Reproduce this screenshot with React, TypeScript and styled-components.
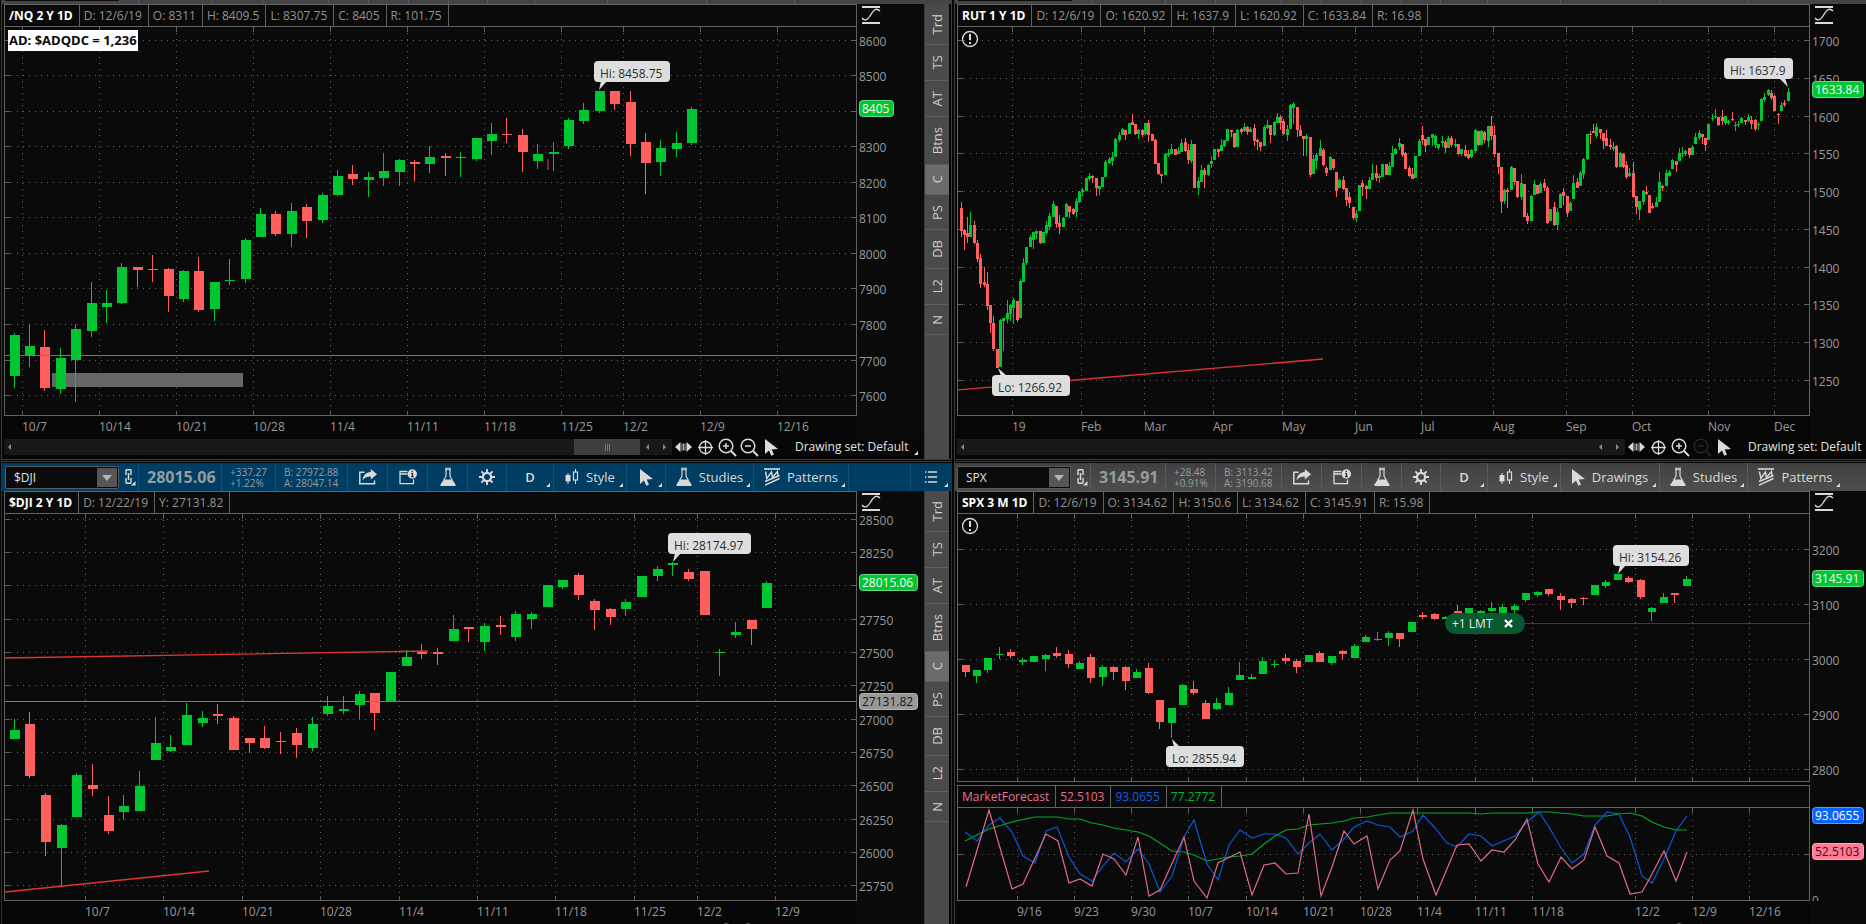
import React from 'react';
import styled, { createGlobalStyle, css } from 'styled-components';

const color = {
  page: '#060606',
  plot: '#0a0a0a',
  frame: '#626262',
  grid: '#606060',
  label: '#929292',
  axis: '#9a9a9a',
  up: '#00c631',
  down: '#ff5f5f',
  trend: '#e03434',
  strip: '#4a4a4a',
  edge: '#3c3c3c',
  active: '#003d62',
};

const GlobalStyle = createGlobalStyle`
  *, *::before, *::after { box-sizing: border-box; }
  html, body { margin: 0; background: ${color.page}; }
  body {
    font-family: "Open Sans", "Noto Sans", sans-serif;
    font-size: 12px;
    color: ${color.label};
    overflow: hidden;
  }
  button, input { font: inherit; color: inherit; margin: 0; padding: 0; border: 0; background: none; }
  svg { display: block; flex: none; }
  svg text { font-size: 12px; }
`;

/* ---------- page frame ---------- */

const Desk = styled.main`
  display: grid;
  grid-template-columns: 953fr 913fr;
  grid-template-rows: 460px 1fr;
  row-gap: 1px;
  height: 100vh;
  overflow: hidden;
`;

const Panel = styled.section<{ $active?: boolean; $last?: boolean; $lower?: boolean }>`
  display: flex;
  flex-direction: column;
  min-width: 0;
  overflow: hidden;
  margin-left: 1px;
  margin-right: ${(p) => (p.$last ? 0 : 1)}px;
  border-left: 1px solid ${(p) => (p.$active ? color.active : color.edge)};
  ${(p) =>
    !p.$last &&
    css`
      border-right: 1px solid ${p.$active ? color.active : color.edge};
    `}
  ${(p) =>
    p.$lower
      ? css`
          border-top: 1px solid ${color.edge};
          padding-top: 1px;
        `
      : css`
          border-bottom: 1px solid ${color.edge};
        `}
`;

const Body = styled.div<{ $last?: boolean }>`
  flex: 1;
  display: flex;
  min-height: 0;
  padding-left: 2px;
  padding-right: ${(p) => (p.$last ? 0 : 2)}px;
`;

const Work = styled.div`
  flex: 1;
  min-width: 0;
  display: flex;
  flex-direction: column;
`;

const ChartRow = styled.div`
  display: flex;
  flex: none;
`;

const PlotColumn = styled.div`
  flex: 1;
  min-width: 0;
`;

const PlotFrame = styled.div<{ $spaced?: boolean }>`
  position: relative;
  border: 1px solid ${color.frame};
  background: ${color.plot};
  margin-top: ${(p) => (p.$spaced ? 3 : 0)}px;
`;

const PriceColumn = styled.div<{ $w: number }>`
  flex: none;
  width: ${(p) => p.$w}px;
  overflow: hidden;
  background: ${color.plot};
`;

const Info = styled.div`
  display: flex;
  height: 22px;
  border-bottom: 1px solid ${color.frame};
`;

const InfoCell = styled.span<{ $ink?: string }>`
  padding: 0 6px 0 4px;
  border-right: 1px solid ${color.frame};
  line-height: 21px;
  white-space: nowrap;
  color: ${(p) => p.$ink ?? color.label};
`;

const Title = styled(InfoCell)`
  font-weight: 700;
  color: #fff;
`;

/* ---------- side tabs ---------- */

const Tabs = styled.nav`
  flex: none;
  width: 25px;
  display: flex;
  flex-direction: column;
  background: ${color.strip};
  border-left: 1px solid #3a3a3a;
`;

const Tab = styled.button<{ $on?: boolean }>`
  display: flex;
  align-items: center;
  justify-content: center;
  padding: 10px 0;
  border-bottom: 1px solid #5e5e5e;
  background: ${(p) => (p.$on ? '#6b6b6b' : 'transparent')};
  color: #cfcfcf;
  font-size: 13px;
  line-height: 16px;

  span {
    writing-mode: vertical-rl;
    transform: rotate(180deg);
  }
`;

const SideTabs = () => (
  <Tabs>
    {['Trd', 'TS', 'AT', 'Btns', 'C', 'PS', 'DB', 'L2', 'N'].map((t) => (
      <Tab key={t} type="button" $on={t === 'C'}>
        <span>{t}</span>
      </Tab>
    ))}
  </Tabs>
);

/* ---------- icons ---------- */

const ink = '#dadada';

const ShareIcon = () => (
  <svg width="18" height="16" viewBox="0 0 18 16" fill="none">
    <path d="M5.500 3.200H.8V14.700h14.700V11.500" stroke={ink} strokeWidth="1.500" />
    <path d="M11.800 0l6.200 5.300-6.200 5.300V7.600C8.200 7.400 5.700 8.400 3.600 11.400 3.900 6.600 6.800 3.300 11.800 3z" fill={ink} />
  </svg>
);

const InfoWindowIcon = () => (
  <svg width="18" height="16" viewBox="0 0 18 16" fill="none">
    <path d="M8.500 5H1M8.500 2.500H1v12.200h13.500V10.500" stroke={ink} strokeWidth="1.300" />
    <circle cx="13.300" cy="5" r="4.700" fill={ink} />
    <path d="M13.300 1.800v1.500M12.200 4.600h1.300v3M12 7.700h2.800" stroke="#26323a" strokeWidth="1.300" />
  </svg>
);

const FlaskIcon = () => (
  <svg width="16" height="20" viewBox="0 0 16 20" fill="none">
    <path d="M5 1.200h6M5.500 2.800h5" stroke={ink} strokeWidth="1.100" />
    <path d="M6 1.500v7.700L3.800 13M10 1.500v7.700l2.200 3.800" stroke={ink} strokeWidth="1.200" />
    <path d="M3.700 12.500h8.600l3.300 5.300q.4 1.200-1 1.200H1.400q-1.400 0-1-1.200z" fill={ink} />
  </svg>
);

const GearIcon = () => (
  <svg width="16" height="16" viewBox="0 0 16 16" fill="none" stroke={ink}>
    <circle cx="8" cy="8" r="4.100" strokeWidth="2.200" />
    <path
      d="M8 0v3.500M8 12.500V16M0 8h3.500M12.500 8H16M2.400 2.400l2.400 2.400M11.200 11.200l2.400 2.400M13.600 2.400l-2.400 2.400M4.800 11.200l-2.400 2.400"
      strokeWidth="1.900"
    />
  </svg>
);

const CandleIcon = () => (
  <svg width="14" height="16" viewBox="0 0 14 16" fill="none">
    <path d="M3 4v11" stroke={ink} />
    <rect x="0.500" y="6" width="5" height="6.500" fill={ink} />
    <path d="M10.500 0v3M10.500 11v4" stroke={ink} />
    <rect x="8.500" y="3" width="4" height="8" stroke={ink} strokeWidth="1.200" />
  </svg>
);

const PointerIcon = () => (
  <svg width="13" height="17" viewBox="0 0 13 17">
    <path d="M0 0v15l4-3.600 2.300 5.300 2.700-1.200-2.300-5.100L13 10z" fill={ink} />
  </svg>
);

const PatternIcon = () => (
  <svg width="16" height="18" viewBox="0 0 16 18" fill="none" stroke={ink}>
    <path d="M0 1h16" strokeWidth="1.600" />
    <path d="M1.500 3.500L2.800 10.500 7.500 4 8.500 9.500 13.500 3.500 14 8" strokeWidth="1.400" />
    <path d="M1 13.500L15.500 7.500M1 17.200L15.500 10.500" strokeWidth="1.400" />
  </svg>
);

const LinkIcon = () => (
  <svg width="11" height="17" viewBox="0 0 11 17" fill="none">
    <path d="M1 6V1.500q0-.7.700-.7h3.600q.7 0 .7.700V6M1 9v4.500q0 .7.700.7h3.600q.7 0 .7-.7V9" stroke={ink} strokeWidth="1.400" />
    <path d="M3.500 4v7" stroke={ink} strokeWidth="1.500" />
    <path d="M10.500 12v4.500H6z" fill={ink} />
  </svg>
);

const ListIcon = () => (
  <svg width="12" height="14" viewBox="0 0 12 14" stroke={ink} strokeWidth="1.300">
    <path d="M0 2h1.500M3 2h9M0 7h1.500M3 7h9M0 12h1.500M3 12h9" />
  </svg>
);

const SpreadIcon = () => (
  <svg width="17" height="12" viewBox="0 0 17 12" fill={ink}>
    <path d="M0 6l5.500-5v10zM17 6l-5.500-5v10z" />
    <path d="M7 2.500v7M8.500 2.500v7M10 2.500v7" stroke={ink} strokeWidth=".8" />
  </svg>
);

const CrosshairIcon = () => (
  <svg width="15" height="15" viewBox="0 0 15 15" fill="none" stroke={ink} strokeWidth="1.300">
    <circle cx="7.500" cy="7.500" r="6" />
    <path d="M7.500 0v15M0 7.500h15" />
  </svg>
);

const ZoomIcon = ({ plus, dim }: { plus?: boolean; dim?: boolean }) => (
  <svg width="19" height="19" viewBox="0 0 19 19" fill="none" stroke={dim ? '#262626' : ink} strokeWidth="1.500">
    <circle cx="8" cy="8" r="6.800" />
    <path d={plus ? 'M5 8h6M8 5v6' : 'M5 8h6'} />
    <path d="M13 13l5 5" strokeWidth="2" />
  </svg>
);

/* ---------- toolbar ---------- */

const Toolbar = styled.div<{ $active?: boolean; $last?: boolean }>`
  display: flex;
  flex: none;
  align-items: stretch;
  height: 28px;
  padding-left: ${(p) => (p.$last ? 2 : 3)}px;
  overflow: hidden;
  background: ${(p) => (p.$active ? color.active : 'linear-gradient(#414141, #4e4e4e)')};
  --rule: ${(p) => (p.$active ? '#0d5480' : '#5a5a5a')};
`;

const Combo = styled.label`
  display: flex;
  flex: none;
  width: 114px;
  height: 23px;
  margin: 3px 0 0;
  border: 1px solid #5a5a5a;
  border-radius: 2px;
  background: #0b0b0b;

  input {
    flex: 1;
    min-width: 0;
    padding-left: 8px;
    color: #e2e2e2;
    outline: none;
  }
`;

const Drop = styled.button`
  display: flex;
  align-items: center;
  justify-content: center;
  width: 20px;
  margin: 1px;
  background: #565656;
`;

const LinkSlot = styled.button`
  display: flex;
  align-items: center;
  justify-content: flex-end;
  flex: none;
  width: 20px;
  padding-right: 2px;
  border-right: 1px solid var(--rule);
`;

const Quote = styled.div<{ $w: number; $big?: boolean }>`
  flex: none;
  width: ${(p) => p.$w}px;
  padding: 4px 0 0 8px;
  border-right: 1px solid var(--rule);
  color: #979c9f;
  font-size: 10px;
  line-height: 11px;
  white-space: nowrap;
  ${(p) =>
    p.$big &&
    css`
      padding-top: 0;
      font-size: 16px;
      font-weight: 700;
      line-height: 28px;
    `}
`;

const Tool = styled.button<{ $w: number }>`
  position: relative;
  display: flex;
  flex: none;
  align-items: center;
  justify-content: center;
  gap: 7px;
  width: ${(p) => p.$w}px;
  border-right: 1px solid var(--rule);
  color: #dadada;
  font-size: 13px;
  white-space: nowrap;

  &:last-child {
    border-right: 0;
  }
`;

const Interval = styled(Tool)`
  font-weight: 600;
`;

const CornerMark = styled.i`
  position: absolute;
  right: 3px;
  bottom: 4px;
  border-style: solid;
  border-width: 0 0 4px 4px;
  border-color: transparent transparent ${ink} transparent;
`;

const Spacer = styled.div`
  flex: 1;
  border-right: 1px solid var(--rule);
`;

type BarProps = {
  symbol: string;
  price: string;
  change: [string, string];
  book: [string, string];
  widths: [number, number, number];
  active?: boolean;
  last?: boolean;
};

const QuoteBar = ({ symbol, price, change, book, widths, active, last }: BarProps) => (
  <Toolbar $active={active} $last={last}>
    <Combo>
      <input aria-label="Symbol" defaultValue={symbol} />
      <Drop type="button" aria-label="Symbol list">
        <svg width="10" height="6" viewBox="0 0 10 6">
          <path d="M0 0h10L5 6z" fill="#b4b4b4" />
        </svg>
      </Drop>
    </Combo>
    <LinkSlot type="button" aria-label="Link colour">
      <LinkIcon />
    </LinkSlot>
    <Quote $w={widths[0]} $big>{price}</Quote>
    <Quote $w={widths[1]}>
      {change[0]}
      <br />
      {change[1]}
    </Quote>
    <Quote $w={widths[2]}>
      {book[0]}
      <br />
      {book[1]}
    </Quote>
    <Tool $w={40} type="button" aria-label="Share"><ShareIcon /></Tool>
    <Tool $w={40} type="button" aria-label="Events"><InfoWindowIcon /></Tool>
    <Tool $w={40} type="button" aria-label="Quick studies"><FlaskIcon /></Tool>
    <Tool $w={39} type="button" aria-label="Settings"><GearIcon /></Tool>
    <Interval $w={47} type="button">D<CornerMark /></Interval>
    <Tool $w={73} type="button"><CandleIcon />Style<CornerMark /></Tool>
    {active ? (
      <Tool $w={39} type="button" aria-label="Drawings"><PointerIcon /><CornerMark /></Tool>
    ) : (
      <Tool $w={99} type="button"><PointerIcon />Drawings<CornerMark /></Tool>
    )}
    <Tool $w={88} type="button"><FlaskIcon />Studies<CornerMark /></Tool>
    <Tool $w={95} type="button"><PatternIcon />Patterns<CornerMark /></Tool>
    {active && <Spacer />}
    {active && <Tool $w={40} type="button" aria-label="Menu"><ListIcon /><CornerMark /></Tool>}
  </Toolbar>
);

const TopEdge = styled.div`
  display: flex;
  flex: none;
  height: 4px;
  padding-left: 3px;
  background: #454545;

  i {
    width: 114px;
    height: 1px;
    background: #0b0b0b;
  }
`;

const EdgeRule = styled.b<{ $w: number }>`
  flex: none;
  width: ${(p) => p.$w}px;
  border-right: 1px solid #5a5a5a;
`;

const HiddenBar = () => (
  <TopEdge>
    <i />
    {[20, 74, 50, 66, 40, 40, 40, 39, 47, 73, 99, 88].map((w, n) => (
      <EdgeRule key={n} $w={w} />
    ))}
  </TopEdge>
);

/* ---------- scroll row ---------- */

const ScrollRow = styled.div`
  display: flex;
  flex: none;
  height: 16px;
`;

const Track = styled.div`
  flex: 1;
  display: flex;
  align-items: center;
  gap: 14px;
  padding: 0 6px 0 4px;
  background: #181818;
`;

const Thumb = styled.div`
  display: flex;
  align-items: center;
  justify-content: center;
  gap: 1px;
  width: 66px;
  height: 16px;
  margin-left: auto;
  margin-right: -8px;
  background: #3e3e3e;

  i {
    width: 1px;
    height: 7px;
    background: #777;
  }
`;

const Fill = styled.div`
  flex: 1;
`;

const Arrow = ({ left }: { left?: boolean }) => (
  <svg width="3" height="6" viewBox="0 0 3 6">
    <path d={left ? 'M3 0v6L0 3z' : 'M0 0v6l3-3z'} fill="#8a8a8a" />
  </svg>
);

const Tools = styled.div<{ $w: number }>`
  display: flex;
  flex: none;
  align-items: center;
  width: ${(p) => p.$w}px;
  margin: -2px 0;
  overflow: hidden;
`;

const RoundTool = styled.button`
  display: flex;
  align-items: center;
  justify-content: center;
  flex: none;
  width: 22px;
`;

const SetButton = styled.button`
  position: relative;
  flex: none;
  margin-left: 13px;
  padding-right: 7px;
  color: #e2e2e2;
  font-size: 12px;
  line-height: 18px;
  white-space: nowrap;

  ${CornerMark} {
    right: -3px;
    bottom: 1px;
  }
`;

const Scroller = ({ w, thumb, dim, label }: { w: number; thumb?: boolean; dim?: boolean; label?: string }) => (
  <ScrollRow>
    <Track>
      <Arrow left />
      {thumb ? <Thumb><i /><i /><i /></Thumb> : <Fill />}
      <Arrow left />
      <Arrow />
    </Track>
    <Tools $w={w}>
      <RoundTool type="button" aria-label="Expand"><SpreadIcon /></RoundTool>
      <RoundTool type="button" aria-label="Crosshair"><CrosshairIcon /></RoundTool>
      <RoundTool type="button" aria-label="Zoom in"><ZoomIcon plus /></RoundTool>
      <RoundTool type="button" aria-label="Zoom out"><ZoomIcon dim={dim} /></RoundTool>
      <RoundTool type="button" aria-label="Pointer"><PointerIcon /></RoundTool>
      {label && <SetButton type="button">{label}<CornerMark /></SetButton>}
    </Tools>
  </ScrollRow>
);

/* ---------- chart drawing ---------- */

type Mark = [number, string];

const Grid = ({ xs, ys, h }: { xs: number[]; ys: number[]; h: number }) => (
  <g shapeRendering="crispEdges" stroke={color.grid}>
    {ys.map((y) => (
      <g key={`h${y}`}>
        <line x1="0" x2="100%" y1={y + 0.5} y2={y + 0.5} strokeDasharray="1 5" />
        <line x1="0" x2="5" y1={y + 0.5} y2={y + 0.5} />
      </g>
    ))}
    {xs.map((x) => (
      <g key={`v${x}`}>
        <line x1={x + 0.5} x2={x + 0.5} y1="0" y2={h} strokeDasharray="1 5" />
        <path d={`M${x + 0.5} 0v5M${x + 0.5} ${h}v-4`} />
      </g>
    ))}
    <svg x="100%" overflow="visible">
      {ys.map((y) => (
        <line key={y} x1="-5" x2="0" y1={y + 0.5} y2={y + 0.5} />
      ))}
    </svg>
  </g>
);

type Bar = { x: number; hi: number; top: number; bottom: number; lo: number; up: boolean };

const parseBars = (src: string): Bar[] =>
  src
    .trim()
    .split(/\s*;\s*/)
    .filter(Boolean)
    .map((row) => {
      const [x, hi, top, bottom, lo, dir] = row.split(' ');
      return { x: +x, hi: +hi, top: +top, bottom: +bottom, lo: +lo, up: dir === 'g' };
    });

const parseDense = (src: string, start: number, step: number): Bar[] =>
  src
    .trim()
    .split(/\s*;\s*/)
    .filter(Boolean)
    .map((row, i) => {
      const [dir, hi, top, bottom, lo] = row.split(' ');
      return { x: Math.floor(start + i * step), hi: +hi, top: +top, bottom: +bottom, lo: +lo, up: dir === 'g' };
    });

const Bars = ({ bars, w }: { bars: Bar[]; w: number }) => {
  const mid = Math.floor((w - 1) / 2);
  return (
    <g shapeRendering="crispEdges">
      {bars.map((b, i) => (
        <g key={i} fill={b.up ? color.up : color.down}>
          <rect x={b.x + mid} y={b.hi} width="1" height={Math.max(1, b.lo - b.hi)} />
          <rect x={b.x} y={b.top} width={w} height={Math.max(1, b.bottom - b.top)} />
        </g>
      ))}
    </g>
  );
};

const Callout = ({ x, y, w, text, tip, foot }: { x: number; y: number; w: number; text: string; tip: [number, number]; foot: number }) => {
  const edge = tip[1] < y ? y + 1 : y + 20;
  return (
    <g>
      <path d={`M${foot} ${edge}L${tip[0]} ${tip[1]}L${foot + 6} ${edge}z`} fill="#dcdcdc" />
      <rect x={x} y={y} width={w} height="21" rx="4" fill="#dedede" />
      <text x={x + 6} y={y + 17} fill="#2e2e2e">{text}</text>
    </g>
  );
};

const Warning = () => (
  <g>
    <circle cx="970" cy="0" r="7.500" fill="none" stroke="#dcdcdc" strokeWidth="1.300" />
    <path d="M970-5v6M970 3v2" stroke="#dcdcdc" strokeWidth="2" />
  </g>
);

const PriceTag = ({ y, w, text, fill, edge, fg = '#fff' }: { y: number; w: number; text: string; fill: string; edge: string; fg?: string }) => (
  <g>
    <rect x="2.500" y={y + 0.5} width={w} height="16" rx="3" fill={fill} stroke={edge} />
    <text x="5" y={y + 13} fill={fg}>{text}</text>
  </g>
);

const WaveIcon = () => (
  <g fill="none" stroke={ink}>
    <path d="M5 3h18M5 19h18" strokeWidth="2" />
    <path d="M5 14c3 4 6 1 8-2s5-10 10-5" strokeWidth="1.300" />
  </g>
);

const PriceAxis = ({ top, h, marks, children }: { top: number; h: number; marks: Mark[]; children?: React.ReactNode }) => (
  <svg width="100%" height={h}>
    <WaveIcon />
    <g transform={`translate(0 ${-top})`}>
      {marks.map(([y, t]) => (
        <text key={t} x="2" y={y + 6} fill={color.axis}>{t}</text>
      ))}
      {children}
    </g>
  </svg>
);

const TimeAxis = ({ left, marks }: { left: number; marks: Mark[] }) => (
  <svg width="100%" height="23">
    {marks.map(([x, t]) => (
      <text key={t} x={x - left} y="15" fill={color.axis}>{t}</text>
    ))}
  </svg>
);

const ys = (marks: Mark[]) => marks.map((m) => m[0]);

/* ---------- data ---------- */

const nqTimes: Mark[] = [[22, '10/7'], [99, '10/14'], [176, '10/21'], [253, '10/28'], [330, '11/4'], [407, '11/11'], [484, '11/18'], [561, '11/25'], [623, '12/2'], [700, '12/9'], [777, '12/16']];
const nqPrices: Mark[] = [[40, '8600'], [75, '8500'], [111, ''], [146, '8300'], [182, '8200'], [217, '8100'], [253, '8000'], [288, '7900'], [324, '7800'], [360, '7700'], [395, '7600']];
const nqBars = parseBars(`
10 333 335 376 388 g;25 324 346 355 367 g;40 330 347 388 391 r;56 348 358 389 394 g;71 324 329 360 402 g;
87 282 303 331 337 g;102 290 303 307 323 g;117 263 267 303 304 g;133 267 267 270 287 r;148 255 269 270 282 r;
164 268 269 296 312 r;179 270 271 299 302 g;194 257 271 310 312 r;210 282 282 309 321 g;225 259 280 281 285 g;
241 238 240 279 283 g;256 208 214 237 237 g;271 211 214 234 236 r;287 203 211 234 247 g;302 204 207 221 238 r;
318 193 195 220 223 g;333 170 176 195 196 g;348 165 174 179 185 r;364 172 177 180 197 g;379 153 171 178 186 g;
395 159 160 172 186 g;410 160 162 164 181 r;425 146 157 164 173 g;441 153 156 158 176 r;456 152 157 158 177 g;
472 138 138 159 161 g;487 123 134 141 155 g;502 118 134 135 143 r;518 129 135 152 172 r;533 144 154 161 169 g;
549 142 152 154 171 g;564 118 120 146 149 g;579 103 110 121 124 g;595 91 91 111 113 g;610 91 91 104 110 r;
626 91 102 144 156 r;641 133 142 163 194 r;656 140 148 162 176 g;672 132 143 149 157 g;687 107 109 143 145 g`);

const rutTimes: Mark[] = [[1012, '19'], [1081, 'Feb'], [1144, 'Mar'], [1213, 'Apr'], [1282, 'May'], [1355, 'Jun'], [1421, 'Jul'], [1493, 'Aug'], [1566, 'Sep'], [1632, 'Oct'], [1708, 'Nov'], [1774, 'Dec']];
const rutPrices: Mark[] = [[40, '1700'], [78, '1650'], [116, '1600'], [153, '1550'], [191, '1500'], [229, '1450'], [267, '1400'], [304, '1350'], [342, '1300'], [380, '1250']];
const rutBars = parseDense(
  `
r 202 208 231 237;r 229 230 235 250;r 217 233 237 243;g 212 225 237 237;r 221 225 243 244;r 240 243 259 262;
r 254 258 284 288;r 267 282 285 287;r 272 284 306 310;r 305 305 323 333;r 316 323 349 351;r 349 349 368 368;
g 319 320 367 367;g 318 318 321 351;g 300 313 319 323;g 304 305 314 321;g 298 300 308 324;r 301 301 320 322;
g 279 281 318 318;g 258 263 282 282;g 247 247 263 265;g 235 237 247 247;g 232 232 240 249;g 231 231 234 239;
r 231 231 243 244;g 232 232 243 243;g 221 225 233 235;g 213 216 227 230;g 201 204 217 217;r 206 206 224 228;
r 215 223 227 234;g 217 218 227 227;g 203 204 217 217;r 206 206 212 218;r 208 209 214 215;g 198 201 212 217;
g 191 192 202 203;g 188 190 192 196;g 178 178 191 191;g 173 176 179 181;r 175 176 178 183;r 178 178 188 196;
g 186 186 189 195;g 177 177 187 187;g 160 162 177 177;g 157 159 163 164;g 152 157 161 166;g 138 139 157 157;
g 132 135 140 142;g 128 129 135 135;r 130 130 135 140;g 123 123 134 134;r 114 122 125 125;r 124 124 134 135;
g 129 130 134 139;r 129 130 135 137;g 123 123 134 135;r 120 123 135 142;r 134 134 141 141;r 139 140 164 164;
r 163 163 174 175;r 174 174 176 183;g 153 154 175 175;g 149 153 155 157;g 144 149 154 154;r 149 149 155 155;
g 147 151 154 154;g 139 143 152 152;r 138 142 151 152;r 144 150 160 164;g 140 144 161 163;r 144 144 188 188;
g 177 181 188 195;g 165 170 182 182;r 168 170 175 188;g 164 165 175 176;g 156 161 164 168;g 149 149 160 160;
r 149 149 152 157;g 139 145 151 151;g 140 140 146 147;g 129 129 141 141;r 130 130 132 137;r 133 133 147 148;
g 129 130 147 147;r 128 129 132 134;g 123 127 131 132;r 126 127 132 135;g 127 129 132 132;r 124 128 141 146;
r 139 140 142 150;r 142 142 147 151;g 125 127 146 146;g 120 125 128 129;r 125 125 135 143;g 121 122 135 136;
g 113 117 123 123;r 115 117 123 130;r 119 121 134 135;g 125 129 135 141;g 104 105 129 129;g 102 104 108 124;
r 107 107 130 137;r 125 130 136 136;r 136 136 139 156;g 134 136 139 156;r 137 137 175 177;g 155 159 174 174;
g 153 155 161 169;g 140 148 156 156;r 148 150 165 166;r 166 168 173 176;g 156 157 170 170;r 159 159 168 170;
r 172 172 191 197;g 179 180 188 188;r 176 180 189 190;r 188 188 200 206;r 192 197 203 208;r 207 207 218 220;
g 210 214 218 222;g 185 185 211 211;r 180 183 187 196;r 185 186 189 199;g 177 180 189 189;g 164 173 180 180;
r 165 173 178 181;g 174 176 178 183;g 164 164 177 177;r 164 164 175 175;g 162 166 175 175;g 146 153 167 167;
g 148 149 154 155;g 138 143 147 150;r 144 144 155 157;r 152 153 169 169;r 166 168 176 177;r 168 174 179 179;
g 156 156 178 178;g 139 141 156 156;r 126 135 140 145;r 139 139 146 152;g 137 137 145 145;g 134 134 138 146;
g 135 136 145 148;g 144 144 148 150;g 136 141 143 147;r 140 142 148 153;g 136 138 148 148;r 136 138 145 147;
g 139 144 146 148;r 144 144 154 155;g 149 149 154 156;r 145 150 156 157;r 150 154 158 159;g 149 150 157 158;
g 129 130 151 153;r 131 131 145 146;g 130 131 145 145;r 131 132 140 143;g 126 126 141 147;r 116 126 136 140;
r 125 135 154 157;r 153 153 167 174;r 167 167 202 213;g 189 190 201 204;r 188 190 192 208;g 166 167 190 190;
r 168 168 182 185;r 181 181 197 198;g 174 183 197 200;r 184 184 217 217;r 213 216 221 224;g 195 196 221 221;
g 180 184 195 195;r 185 185 194 194;g 182 184 193 193;r 179 183 188 191;r 186 188 223 224;g 209 209 221 221;
r 202 207 225 226;g 208 212 225 230;g 193 194 208 208;r 188 192 196 205;r 196 196 213 217;g 201 203 211 211;
g 175 183 199 199;r 178 182 188 188;g 171 173 186 186;g 158 159 174 179;g 134 134 159 160;r 131 134 135 144;
r 124 131 133 133;g 123 127 136 138;r 129 129 133 139;r 133 133 141 149;r 130 138 146 146;r 139 145 147 150;
g 142 147 149 151;r 145 146 167 168;g 152 153 167 167;r 153 154 167 168;r 161 165 177 179;g 168 173 176 177;
r 162 173 197 198;r 196 196 207 214;g 201 201 210 220;g 190 191 202 205;r 186 192 194 195;r 195 195 213 213;
r 203 206 208 209;g 197 202 207 207;g 172 182 202 202;r 185 186 188 191;g 170 173 186 186;g 170 172 176 177;
g 159 160 169 169;r 161 161 165 172;g 148 153 161 161;g 147 153 154 157;g 150 151 154 156;r 148 148 155 158;
g 145 147 155 155;g 133 137 144 144;g 130 133 138 140;r 134 134 137 144;r 138 138 145 151;g 124 124 140 140;
g 114 118 119 121;g 109 116 117 118;r 117 117 125 126;r 110 117 121 125;g 116 116 123 125;g 120 121 123 125;
r 112 119 120 121;g 122 125 126 131;g 121 124 125 127;g 117 118 123 123;r 120 120 122 125;g 114 117 121 122;
r 116 120 124 129;r 119 120 129 131;g 122 124 125 130;g 98 99 121 121;g 93 97 100 102;g 89 90 95 96;
r 90 93 98 100;r 95 96 111 111;r 113 114 115 124;g 102 105 111 111;r 100 103 105 107;g 88 92 101 101`,
  960,
  3.295,
);

const djiTimes: Mark[] = [[85, '10/7'], [163, '10/14'], [242, '10/21'], [320, '10/28'], [399, '11/4'], [477, '11/11'], [555, '11/18'], [634, '11/25'], [697, '12/2'], [775, '12/9']];
const djiPrices: Mark[] = [[519, '28500'], [552, '28250'], [585, ''], [619, '27750'], [652, '27500'], [685, '27250'], [719, '27000'], [752, '26750'], [785, '26500'], [819, '26250'], [852, '26000'], [885, '25750']];
const djiBars = parseBars(`
10 719 730 739 739 g;25 712 724 776 778 r;41 793 795 842 856 r;57 824 825 848 886 g;72 773 775 817 817 g;
88 764 785 789 796 r;104 796 815 831 834 r;119 795 806 812 820 g;135 771 786 811 811 g;151 717 743 760 760 g;
166 735 747 751 752 g;182 703 715 745 745 g;198 711 718 723 727 g;213 704 714 716 724 r;229 716 718 750 750 r;
245 738 738 743 753 r;260 726 738 748 749 r;276 732 741 742 754 r;292 728 733 745 758 r;308 717 724 748 751 g;
323 696 706 714 716 g;339 696 709 711 714 g;355 691 694 705 719 g;370 693 693 713 730 r;386 672 672 701 701 g;
402 650 657 666 666 g;417 644 652 654 659 r;433 648 652 654 665 r;449 615 629 641 641 g;464 627 627 629 642 r;
480 623 626 642 651 g;496 616 625 627 635 r;511 611 614 637 641 g;527 612 614 619 629 g;543 585 585 607 607 g;
558 580 580 587 589 g;574 573 575 595 600 r;590 599 601 610 630 r;606 608 609 617 625 r;621 599 602 609 616 g;
637 576 576 597 597 g;653 566 569 576 581 g;668 562 563 565 576 g;684 569 572 579 581 r;700 571 571 615 615 r;
715 649 652 653 676 g;731 622 632 635 638 g;747 620 620 629 645 r;762 581 583 608 608 g`);

const spxTimes: Mark[] = [[1017, '9/16'], [1074, '9/23'], [1131, '9/30'], [1188, '10/7'], [1246, '10/14'], [1303, '10/21'], [1360, '10/28'], [1417, '11/4'], [1475, '11/11'], [1532, '11/18'], [1635, '12/2'], [1692, '12/9'], [1749, '12/16']];
const spxPrices: Mark[] = [[549, '3200'], [604, '3100'], [659, '3000'], [714, '2900'], [769, '2800']];
const spxBars = parseBars(`
962 665 665 672 677 r;973 670 670 676 683 g;984 658 658 670 673 g;996 647 654 655 659 g;1007 649 652 656 658 r;
1019 658 660 662 665 g;1030 656 656 662 662 g;1042 654 655 659 671 g;1053 647 653 656 658 r;1065 650 654 664 668 r;
1076 661 663 669 669 g;1087 654 657 678 683 r;1099 665 667 677 686 g;1110 666 667 672 680 r;1122 666 667 681 690 r;
1133 669 672 678 678 g;1145 663 668 693 694 r;1156 700 700 722 729 r;1168 708 708 723 738 g;1179 684 685 705 705 g;
1190 681 689 693 695 r;1202 700 703 719 719 r;1213 698 703 709 710 g;1225 687 693 705 705 g;1236 662 675 680 680 g;
1248 674 677 679 679 g;1259 657 661 674 674 g;1271 660 664 665 668 g;1282 654 658 661 664 r;1293 659 661 667 673 r;
1305 655 655 662 662 g;1316 651 653 662 662 r;1328 656 656 663 665 g;1339 650 651 654 660 r;1351 644 646 658 658 g;
1362 635 637 642 642 g;1374 632 639 640 641 g;1385 631 633 638 646 g;1396 633 633 639 647 r;1408 622 622 632 632 g;
1419 612 615 617 619 r;1431 613 614 619 620 r;1442 616 617 619 619 g;1454 605 611 613 614 r;1465 608 608 613 613 g;
1477 610 611 613 613 g;1488 602 608 611 612 g;1499 604 607 614 614 g;1511 604 606 610 613 g;1522 593 593 600 602 g;
1534 591 592 595 597 g;1545 589 589 594 596 r;1557 593 596 600 610 r;1568 598 599 603 608 r;1580 597 598 599 605 r;
1591 585 585 595 595 g;1602 580 582 586 588 g;1614 574 574 580 580 g;1625 576 578 582 583 r;1637 579 580 597 599 r;
1648 607 608 612 621 g;1660 593 597 603 603 g;1671 593 593 595 603 r;1683 576 579 586 586 g`);

const forecast = {
  momentum:
    '966,887 989,810 1012,889 1023,884 1046,834 1058,841 1069,883 1080,879 1092,886 1103,854 1114,859 1126,875 1138,837 1149,896 1160,890 1184,837 1194,881 1207,898 1218,863 1240,852 1252,895 1264,865 1275,863 1286,874 1298,873 1309,814 1321,896 1332,867 1344,831 1354,844 1367,836 1378,889 1390,860 1400,851 1413,810 1423,859 1436,895 1457,845 1469,844 1481,861 1492,850 1504,852 1515,840 1527,819 1538,864 1549,882 1561,857 1572,869 1584,860 1595,827 1607,856 1619,863 1630,894 1642,892 1652,874 1664,851 1676,881 1687,852',
  nearTerm:
    '965,832 977,841 989,825 1000,818 1012,832 1023,856 1035,863 1046,831 1057,827 1069,857 1080,874 1092,881 1103,866 1114,853 1126,862 1138,849 1149,864 1160,892 1172,876 1184,837 1194,820 1207,864 1218,880 1229,845 1240,830 1252,838 1264,834 1275,834 1286,838 1298,854 1309,843 1320,834 1332,850 1344,839 1354,827 1367,821 1378,825 1390,827 1400,837 1413,831 1423,815 1435,828 1447,843 1457,847 1469,834 1481,836 1492,846 1515,836 1527,822 1539,812 1549,827 1561,848 1572,863 1584,854 1595,825 1607,812 1619,814 1630,837 1642,876 1652,883 1664,859 1676,831 1687,816',
  intermediate:
    '965,841 989,829 1012,822 1035,817 1057,817 1069,819 1080,819 1092,823 1103,825 1114,828 1138,832 1149,836 1172,851 1184,852 1194,855 1207,861 1218,859 1229,857 1240,856 1252,854 1264,844 1275,836 1286,830 1298,829 1309,825 1320,824 1332,823 1344,821 1354,818 1367,817 1390,813 1469,813 1481,814 1492,813 1527,813 1538,812 1549,812 1572,814 1584,816 1607,816 1619,814 1630,813 1642,816 1652,822 1664,827 1676,830 1687,830',
};

/* ---------- plots ---------- */

/* Marks share one desk-wide coordinate space; each plot shifts it to its own corner. */
const Plot = ({ left, top, h, times, levels, children }: { left: number; top: number; h: number; times: Mark[]; levels: number[]; children: React.ReactNode }) => (
  <svg width="100%" height={h}>
    <Grid xs={times.map((t) => t[0] - left)} ys={levels.map((y) => y - top)} h={h} />
    <g transform={`translate(${-left} ${-top})`}>{children}</g>
  </svg>
);

const StudyLabel = styled.div`
  position: absolute;
  left: 3px;
  top: 25px;
  padding: 0 1px;
  background: #fff;
  color: #0a0a0a;
  font-size: 13px;
  font-weight: 700;
  line-height: 21px;
`;

const OrderPill = styled.button`
  position: absolute;
  left: 487px;
  top: 121px;
  display: flex;
  align-items: center;
  gap: 11px;
  height: 21px;
  padding: 0 12px 0 7px;
  border-radius: 11px;
  background: #07592f;
  color: #e8e8e8;
  white-space: nowrap;
`;

const InfoRow = ({ title, cells }: { title: string; cells: string[] }) => (
  <Info>
    <Title>{title}</Title>
    {cells.map((c) => (
      <InfoCell key={c}>{c}</InfoCell>
    ))}
  </Info>
);

const green = { fill: '#00c631', edge: '#5fdc80' };

export default function App() {
  return (
    <>
      <GlobalStyle />
      <Desk>
        <Panel>
          <HiddenBar />
          <Body>
            <Work>
              <ChartRow>
                <PlotColumn>
                  <PlotFrame>
                    <InfoRow title="/NQ 2 Y 1D" cells={['D: 12/6/19', 'O: 8311', 'H: 8409.5', 'L: 8307.75', 'C: 8405', 'R: 101.75']} />
                    <Plot left={5} top={27} h={388} times={nqTimes} levels={ys(nqPrices)}>
                      <rect x="52" y="373" width="191" height="14" fill="#666" />
                      <Bars bars={nqBars} w={10} />
                      <rect x="547" y="159" width="2" height="11" fill="#7a2428" />
                      <rect x="5" y="355" width="100%" height="1" fill="#f04040" />
                      <Callout x={594} y={61} w={76} text="Hi: 8458.75" tip={[599, 90]} foot={601} />
                    </Plot>
                    <StudyLabel>AD: $ADQDC = 1,236</StudyLabel>
                  </PlotFrame>
                  <TimeAxis left={4} marks={nqTimes} />
                </PlotColumn>
                <PriceColumn $w={67}>
                  <PriceAxis top={4} h={435} marks={nqPrices.filter((m) => m[1])}>
                    <PriceTag y={100} w={34} text="8405" {...green} />
                  </PriceAxis>
                </PriceColumn>
              </ChartRow>
              <Scroller w={252} thumb label="Drawing set: Default" />
            </Work>
            <SideTabs />
          </Body>
        </Panel>

        <Panel $last>
          <HiddenBar />
          <Body $last>
            <Work>
              <ChartRow>
                <PlotColumn>
                  <PlotFrame>
                    <InfoRow title="RUT 1 Y 1D" cells={['D: 12/6/19', 'O: 1620.92', 'H: 1637.9', 'L: 1620.92', 'C: 1633.84', 'R: 16.98']} />
                    <Plot left={958} top={27} h={388} times={rutTimes} levels={ys(rutPrices)}>
                      <path d="M957 390L1323 359" stroke={color.trend} strokeWidth="1.300" />
                      <Bars bars={rutBars} w={3} />
                      <g transform="translate(0 39)"><Warning /></g>
                      <Callout x={1724} y={58} w={69} text="Hi: 1637.9" tip={[1788, 87]} foot={1779} />
                      <Callout x={992} y={375} w={78} text="Lo: 1266.92" tip={[998, 368]} foot={1001} />
                    </Plot>
                  </PlotFrame>
                  <TimeAxis left={957} marks={rutTimes} />
                </PlotColumn>
                <PriceColumn $w={56}>
                  <PriceAxis top={4} h={435} marks={rutPrices}>
                    <PriceTag y={81} w={51} text="1633.84" {...green} />
                  </PriceAxis>
                </PriceColumn>
              </ChartRow>
              <Scroller w={241} dim label="Drawing set: Default" />
            </Work>
          </Body>
        </Panel>

        <Panel $active $lower>
          <QuoteBar
            symbol="$DJI"
            price="28015.06"
            change={['+337.27', '+1.22%']}
            book={['B: 27972.88', 'A: 28047.14']}
            widths={[83, 54, 72]}
            active
          />
          <Body>
            <Work>
              <ChartRow>
                <PlotColumn>
                  <PlotFrame>
                    <InfoRow title="$DJI 2 Y 1D" cells={['D: 12/22/19', 'Y: 27131.82']} />
                    <Plot left={5} top={514} h={386} times={djiTimes} levels={ys(djiPrices)}>
                      <Bars bars={djiBars} w={10} />
                      <path d="M5 658L428 651M5 892L209 871" stroke={color.trend} strokeWidth="1.300" />
                      <rect x="5" y="701" width="100%" height="1" fill="#7c7c7c" />
                      <Callout x={668} y={533} w={83} text="Hi: 28174.97" tip={[673, 562]} foot={675} />
                    </Plot>
                  </PlotFrame>
                  <TimeAxis left={4} marks={djiTimes} />
                </PlotColumn>
                <PriceColumn $w={67}>
                  <PriceAxis top={491} h={433} marks={djiPrices.filter((m) => m[1])}>
                    <PriceTag y={574} w={58} text="28015.06" {...green} />
                    <PriceTag y={693} w={58} text="27131.82" fill="#989898" edge="#b4b4b4" fg="#161616" />
                  </PriceAxis>
                </PriceColumn>
              </ChartRow>
              <Scroller w={252} thumb />
            </Work>
            <SideTabs />
          </Body>
        </Panel>

        <Panel $last $lower>
          <QuoteBar
            symbol="SPX"
            price="3145.91"
            change={['+28.48', '+0.91%']}
            book={['B: 3113.42', 'A: 3190.68']}
            widths={[75, 50, 66]}
            last
          />
          <Body $last>
            <Work>
              <ChartRow>
                <PlotColumn>
                  <PlotFrame>
                    <InfoRow title="SPX 3 M 1D" cells={['D: 12/6/19', 'O: 3134.62', 'H: 3150.6', 'L: 3134.62', 'C: 3145.91', 'R: 15.98']} />
                    <Plot left={958} top={514} h={267} times={spxTimes} levels={ys(spxPrices)}>
                      <Bars bars={spxBars} w={8} />
                      <rect x="1525" y="623" width="100%" height="1" fill="#0a5a30" />
                      <g transform="translate(0 526)"><Warning /></g>
                      <Callout x={1613} y={545} w={76} text="Hi: 3154.26" tip={[1618, 574]} foot={1620} />
                      <Callout x={1166} y={746} w={78} text="Lo: 2855.94" tip={[1172, 739]} foot={1174} />
                    </Plot>
                    <OrderPill type="button">
                      +1 LMT
                      <svg width="9" height="9" viewBox="0 0 9 9">
                        <path d="M1 1l7 7M8 1L1 8" stroke="#fff" strokeWidth="2.400" />
                      </svg>
                    </OrderPill>
                  </PlotFrame>
                  <PlotFrame $spaced>
                    <Info>
                      <InfoCell $ink="#e8708a">MarketForecast</InfoCell>
                      <InfoCell $ink="#e8708a">52.5103</InfoCell>
                      <InfoCell $ink="#0a5de6">93.0655</InfoCell>
                      <InfoCell $ink="#00b82e">77.2772</InfoCell>
                    </Info>
                    <Plot left={958} top={808} h={92} times={spxTimes} levels={[854]}>
                      <g fill="none" strokeWidth="1.200">
                        <polyline points={forecast.intermediate} stroke="#00a828" />
                        <polyline points={forecast.nearTerm} stroke="#0a58d6" />
                        <polyline points={forecast.momentum} stroke="#e06c84" />
                      </g>
                    </Plot>
                  </PlotFrame>
                  <TimeAxis left={957} marks={spxTimes} />
                </PlotColumn>
                <PriceColumn $w={56}>
                  <PriceAxis top={491} h={410} marks={[...spxPrices, [899, '0']]}>
                    <PriceTag y={570} w={51} text="3145.91" {...green} />
                    <PriceTag y={807} w={51} text="93.0655" fill="#0a63ff" edge="#5e98ff" />
                    <PriceTag y={843} w={51} text="52.5103" fill="#ff7a94" edge="#ffa2b4" fg="#3a0a14" />
                  </PriceAxis>
                </PriceColumn>
              </ChartRow>
              <Scroller w={241} thumb dim />
            </Work>
          </Body>
        </Panel>
      </Desk>
    </>
  );
}
